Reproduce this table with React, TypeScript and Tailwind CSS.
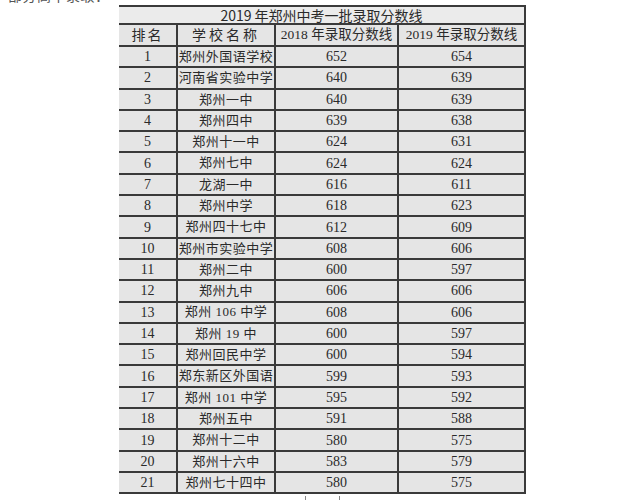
import React from "react";

const rows: [string, string, string, string][] = [
  ["1", "郑州外国语学校", "652", "654"],
  ["2", "河南省实验中学", "640", "639"],
  ["3", "郑州一中", "640", "639"],
  ["4", "郑州四中", "639", "638"],
  ["5", "郑州十一中", "624", "631"],
  ["6", "郑州七中", "624", "624"],
  ["7", "龙湖一中", "616", "611"],
  ["8", "郑州中学", "618", "623"],
  ["9", "郑州四十七中", "612", "609"],
  ["10", "郑州市实验中学", "608", "606"],
  ["11", "郑州二中", "600", "597"],
  ["12", "郑州九中", "606", "606"],
  ["13", "郑州 106 中学", "608", "606"],
  ["14", "郑州 19 中", "600", "597"],
  ["15", "郑州回民中学", "600", "594"],
  ["16", "郑东新区外国语", "599", "593"],
  ["17", "郑州 101 中学", "595", "592"],
  ["18", "郑州五中", "591", "588"],
  ["19", "郑州十二中", "580", "575"],
  ["20", "郑州十六中", "583", "579"],
  ["21", "郑州七十四中", "580", "575"],
];

const serif = { fontFamily: '"Liberation Serif", "Noto Sans CJK SC", serif' };

export default function App() {
  return (
    <div className="w-[629px] h-[500px] bg-white overflow-hidden text-[#2a2a2a]">
      <div className="h-[5px] overflow-hidden pl-[8px]">
        <div
          className="text-[14px] leading-[14px] mt-[-12px] text-[#555] tracking-[0.5px]"
          style={{ fontFamily: '"Noto Sans CJK SC", sans-serif' }}
        >
          部分高中录取：
        </div>
      </div>
      <div
        className="ml-[119px] w-[407px] grid grid-cols-[59px_98px_123px_127px] bg-[#e5e5e5]"
        style={serif}
      >
        <div
          className="col-span-4 h-[20px] border-t-2 border-b-2 border-r-2 border-[#3a3a3a] bg-[#ebebeb] flex items-center justify-center text-[14px]"
          style={{ fontFamily: '"Noto Sans CJK SC", sans-serif' }}
        >
          2019 年郑州中考一批录取分数线
        </div>
        <div className="h-[22px] border-b-2 border-r-2 border-[#3a3a3a] flex items-center justify-center text-[14px] tracking-[2px]">
          排名
        </div>
        <div className="h-[22px] border-b-2 border-r-2 border-[#3a3a3a] flex items-center justify-center text-[14px] tracking-[3px]">
          学校名称
        </div>
        <div className="h-[22px] border-b-2 border-r-2 border-[#3a3a3a] flex items-center justify-center text-[13.5px] whitespace-nowrap">
          2018 年录取分数线
        </div>
        <div className="h-[22px] border-b-2 border-r-2 border-[#3a3a3a] flex items-center justify-center text-[13.5px] whitespace-nowrap">
          2019 年录取分数线
        </div>
        {rows.map((r) => (
          <React.Fragment key={r[0]}>
            <div className="h-[21.3px] border-b-2 border-r-2 border-[#3a3a3a] flex items-center justify-center text-[14px]">
              {r[0]}
            </div>
            <div className="h-[21.3px] border-b-2 border-r-2 border-[#3a3a3a] flex items-center justify-center text-[13px] tracking-[0.5px] whitespace-nowrap">
              {r[1]}
            </div>
            <div className="h-[21.3px] border-b-2 border-r-2 border-[#3a3a3a] flex items-center justify-center text-[14px]">
              {r[2]}
            </div>
            <div className="h-[21.3px] border-b-2 border-r-2 border-[#3a3a3a] flex items-center justify-center text-[14px]">
              {r[3]}
            </div>
          </React.Fragment>
        ))}
      </div>
      <div className="flex mt-[2px] ml-[305px] gap-[33px]">
        <div className="w-px h-[6px] bg-[#888]" />
        <div className="w-px h-[6px] bg-[#888]" />
      </div>
    </div>
  );
}
